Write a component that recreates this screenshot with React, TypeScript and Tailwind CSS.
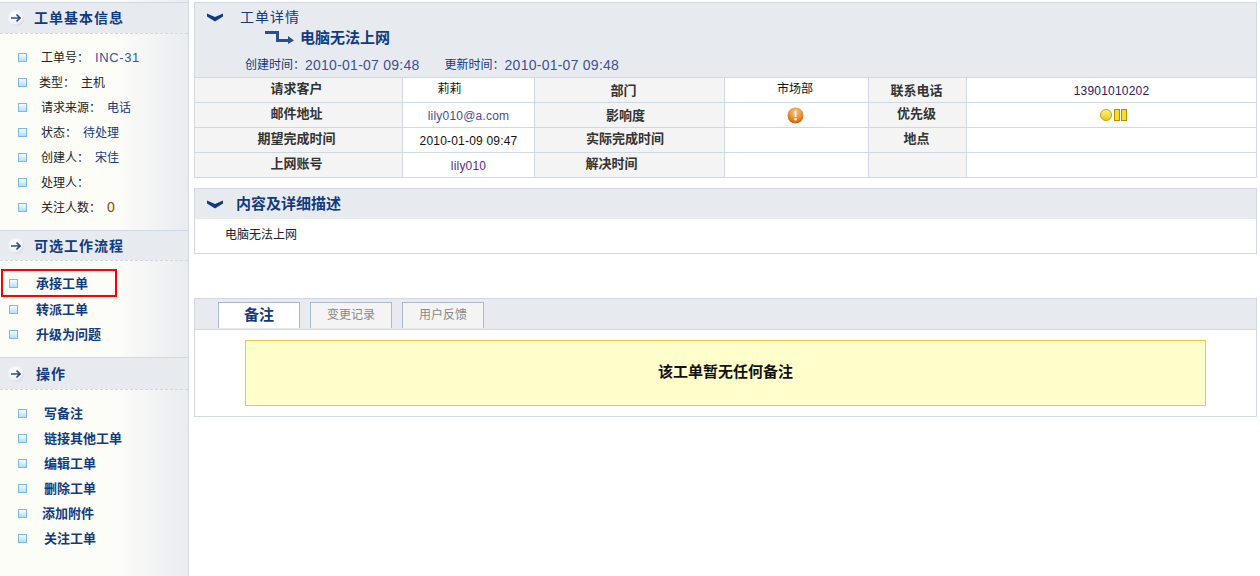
import type { ReactNode } from 'react';

const FONT = "font-['Liberation_Sans','Noto_Sans_CJK_SC',sans-serif]";

// サイドバー見出しの丸矢印
function ArrowBall() {
  return (
    <svg width="16" height="16" viewBox="0 0 16 16" className="shrink-0">
      <defs>
        <radialGradient id="ball" cx="0.4" cy="0.35" r="0.7">
          <stop offset="0" stopColor="#ffffff" />
          <stop offset="0.7" stopColor="#f0f1f4" />
          <stop offset="1" stopColor="#cfd4dc" />
        </radialGradient>
      </defs>
      <circle cx="8" cy="8" r="8" fill="url(#ball)" />
      <path d="M3 8h9M8.5 4.5 12 8l-3.5 3.5" fill="none" stroke="#2f4f7f" strokeWidth="1.7" />
    </svg>
  );
}

function Chevron() {
  return (
    <svg width="16" height="9" viewBox="0 0 16 9" className="shrink-0">
      <path d="M0 0.5 8 4 16 0.5V3.5L8 8.5 0 3.5Z" fill="#123a80" />
    </svg>
  );
}

function Bullet() {
  return (
    <span className="block h-[9px] w-[9px] shrink-0 border border-[#7db8e8] bg-gradient-to-b from-[#f5fbff] to-[#b5e0fa]" />
  );
}

function SideHeader({ title, pad, height }: { title: string; pad: string; height: string }) {
  return (
    <div className={`flex items-center border-t border-[#cfd8e3] bg-[#e7ebf0] pl-[8px] ${height}`}>
      <ArrowBall />
      <span className={`text-[14px] font-bold tracking-[1px] text-[#123a80] ${pad}`}>{title}</span>
    </div>
  );
}

function Dashed() {
  return <div className="h-px border-b border-dashed border-[#cfd8e3]" />;
}

function InfoRow({ label, value, tone, indent }: { label: string; value?: string; tone?: string; indent: string }) {
  return (
    <li className="flex h-[25px] items-center pl-[18px]">
      <Bullet />
      <span className={`text-[12px] text-[#222] ${indent}`}>{label}：</span>
      {value && <span className={`ml-[6px] ${tone ?? 'text-[12px] text-[#123a80]'}`}>{value}</span>}
    </li>
  );
}

function LinkRow({ label, indent }: { label: string; indent: string }) {
  return (
    <li className="flex h-[25px] items-center pl-[18px]">
      <Bullet />
      <span className={`text-[13px] font-bold text-[#123a80] ${indent}`}>{label}</span>
    </li>
  );
}

function FlowRow({ label }: { label: string }) {
  return (
    <li className="flex h-[25px] items-center pl-[9px]">
      <Bullet />
      <span className="ml-[18px] text-[13px] font-bold text-[#123a80]">{label}</span>
    </li>
  );
}

function Sidebar() {
  return (
    <aside className="flex h-[576px] w-[189px] shrink-0 flex-col border-r border-[#cfd8e3] bg-gradient-to-r from-[#fdfdf8] from-60% to-[#e9ecf0] pt-[2px]">
      <SideHeader title="工单基本信息" pad="ml-[10px]" height="h-[31px]" />
      <Dashed />
      <ul className="h-[196px] pt-[11px]">
        <InfoRow label="工单号" value="INC-31" tone="text-[13px] tracking-[0.6px] text-[#3b4f9a]" indent="ml-[14px]" />
        <InfoRow label="类型" value="主机" tone="text-[12px] text-[#222]" indent="ml-[12px]" />
        <InfoRow label="请求来源" value="电话" indent="ml-[14px]" />
        <InfoRow label="状态" value="待处理" indent="ml-[14px]" />
        <InfoRow label="创建人" value="宋佳" indent="ml-[14px]" />
        <InfoRow label="处理人" indent="ml-[14px]" />
        <InfoRow label="关注人数" value="0" tone="text-[14px] text-[#7a4a10]" indent="ml-[14px]" />
      </ul>
      <SideHeader title="可选工作流程" pad="ml-[10px] pt-[1px]" height="h-[30px]" />
      <Dashed />
      <div className="h-[96px] pt-[8px]">
        <div className="ml-[1px] flex h-[28px] w-[116px] items-center border-2 border-[#ff0000] pl-[6px]">
          <Bullet />
          <span className="ml-[18px] pt-[1px] text-[13px] font-bold text-[#123a80]">承接工单</span>
        </div>
        <ul>
          <FlowRow label="转派工单" />
          <FlowRow label="升级为问题" />
        </ul>
      </div>
      <SideHeader title="操作" pad="ml-[12px] pt-[1px]" height="h-[32px]" />
      <Dashed />
      <ul className="pt-[11px]">
        <LinkRow label="写备注" indent="ml-[17px]" />
        <LinkRow label="链接其他工单" indent="ml-[17px]" />
        <LinkRow label="编辑工单" indent="ml-[17px]" />
        <LinkRow label="删除工单" indent="ml-[17px]" />
        <LinkRow label="添加附件" indent="ml-[15px]" />
        <LinkRow label="关注工单" indent="ml-[17px]" />
      </ul>
    </aside>
  );
}

function Label({ children, cls }: { children?: ReactNode; cls: string }) {
  return (
    <td className={`${cls} border border-[#cfd8e3] bg-[#f4f4f4] text-center align-middle text-[13px] font-bold text-[#333]`}>
      {children}
    </td>
  );
}

function Value({ children, cls }: { children?: ReactNode; cls: string }) {
  return (
    <td className={`${cls} border border-[#cfd8e3] text-center align-middle text-[12px]`}>
      {children}
    </td>
  );
}

function ImpactIcon() {
  return (
    <svg width="17" height="17" viewBox="0 0 16 16" className="mx-auto block">
      <defs>
        <radialGradient id="impact" cx="0.5" cy="0.3" r="0.75">
          <stop offset="0" stopColor="#f9c98a" />
          <stop offset="0.6" stopColor="#e8892a" />
          <stop offset="1" stopColor="#b9560f" />
        </radialGradient>
      </defs>
      <circle cx="8" cy="8" r="7.5" fill="url(#impact)" />
      <path d="M6.9 3.5h2.2L8.7 9.5H7.3Z" fill="#fff" />
      <circle cx="8" cy="11.5" r="1.2" fill="#fff" />
    </svg>
  );
}

function PriorityIcon() {
  return (
    <div className="flex items-center justify-center gap-[1px]">
      <span className="h-[12px] w-[12px] rounded-full border border-[#c9a400] bg-gradient-to-b from-[#fff27a] to-[#eec900]" />
      <span className="ml-[1px] h-[12px] w-[6px] border border-[#b98f00] bg-[#f8d92c]" />
      <span className="h-[12px] w-[6px] border border-[#b98f00] bg-[#f8d92c]" />
    </div>
  );
}

function TicketDetail() {
  const latin = 'pt-[1px] tracking-[0.2px]';
  return (
    <section className="mt-[2px] border-r border-[#cfd8e3]">
      <div className="h-[75px] border-l border-t border-[#cfd8e3] bg-[#e7ebf0]">
        <div className="flex h-[26px] items-center pl-[12px] pt-[3px]">
          <Chevron />
          <span className="ml-[17px] text-[14px] tracking-[1px] text-[#123a80]">工单详情</span>
        </div>
        <div className="flex h-[17px] items-center pl-[70px]">
          <svg width="30" height="14" viewBox="0 0 30 14">
            <path d="M0 1.5h14M12.5 1.5v8H24" fill="none" stroke="#2a4f8a" strokeWidth="3" />
            <path d="M23 5 29 9.5 23 13Z" fill="#2a4f8a" />
          </svg>
          <span className="ml-[5px] pt-[1px] text-[15px] font-bold text-[#123a80]">电脑无法上网</span>
        </div>
        <div className="flex h-[27px] items-center pl-[50px] pt-[11px] text-[12px] text-[#123a80]">
          <span>创建时间：</span>
          <span className="text-[14px] tracking-[0.25px] text-[#3f4f96]">2010-01-07 09:48</span>
          <span className="ml-[25px]">更新时间：</span>
          <span className="text-[14px] tracking-[0.25px] text-[#3f4f96]">2010-01-07 09:48</span>
        </div>
      </div>
      <table className="w-[1062px] table-fixed border-collapse">
        <tbody>
          <tr className="h-[25px]">
            <Label cls="w-[208px] pr-[4px] pb-[2px]">请求客户</Label>
            <Value cls="w-[132px] pr-[38px] pb-[2px] text-[#111]">莉莉</Value>
            <Label cls="w-[190px] pr-[12px] pt-[2px]">部门</Label>
            <Value cls="w-[144px] pr-[3px] pb-[2px] text-[#111]">市场部</Value>
            <Label cls="w-[98px] pr-[2px] pt-[2px]">联系电话</Label>
            <Value cls={`w-[290px] text-[#2a2060] ${latin}`}>13901010202</Value>
          </tr>
          <tr className="h-[25px]">
            <Label cls="pr-[4px] pb-[2px]">邮件地址</Label>
            <Value cls={`text-[#4a4f8a] ${latin}`}>lily010@a.com</Value>
            <Label cls="pr-[8px] pt-[2px]">影响度</Label>
            <Value cls="pr-[2px]"><ImpactIcon /></Value>
            <Label cls="pr-[2px] pb-[2px]">优先级</Label>
            <Value cls="pl-[3px]"><PriorityIcon /></Value>
          </tr>
          <tr className="h-[25px]">
            <Label cls="pr-[4px] pb-[2px]">期望完成时间</Label>
            <Value cls={`text-[#111] ${latin}`}>2010-01-09 09:47</Value>
            <Label cls="pr-[9px] pb-[2px]">实际完成时间</Label>
            <Value cls="" />
            <Label cls="pr-[2px] pb-[2px]">地点</Label>
            <Value cls="" />
          </tr>
          <tr className="h-[25px]">
            <Label cls="pr-[4px] pb-[2px]">上网账号</Label>
            <Value cls={`text-[#5a2a8a] ${latin}`}>lily010</Value>
            <Label cls="pr-[36px] pb-[2px]">解决时间</Label>
            <Value cls="" />
            <Label cls="" />
            <Value cls="" />
          </tr>
        </tbody>
      </table>
    </section>
  );
}

function Description() {
  return (
    <section className="mt-[10px] border border-[#cfd8e3]">
      <div className="flex h-[30px] items-center bg-[#e7ebf0] pl-[12px]">
        <Chevron />
        <span className="ml-[13px] text-[15px] font-bold text-[#123a80]">内容及详细描述</span>
      </div>
      <p className="h-[34px] pl-[30px] pt-[7px] text-[12px] leading-[18px] text-[#222]">电脑无法上网</p>
    </section>
  );
}

function Notes() {
  return (
    <section className="mt-[44px] border border-[#cfd8e3]">
      <div className="flex h-[31px] items-end gap-[10px] border-b border-[#cfd8e3] bg-[#e7ebf0] pb-[1px] pl-[23px]">
        <div className="flex h-[26px] w-[82px] items-center justify-center border border-b-0 border-[#a9bacd] bg-white pb-[1px] text-[15px] font-bold text-[#123a80]">
          备注
        </div>
        <div className="flex h-[26px] w-[82px] items-center justify-center border border-b-0 border-[#a9bacd] bg-[#f4f4f4] pb-[1px] text-[12px] text-[#888]">
          变更记录
        </div>
        <div className="flex h-[26px] w-[82px] items-center justify-center border border-b-0 border-[#a9bacd] bg-[#f4f4f4] pb-[1px] text-[12px] text-[#888]">
          用户反馈
        </div>
      </div>
      <div className="h-[86px] pl-[50px] pr-[50px] pt-[10px]">
        <div className="flex h-[66px] w-[961px] items-center justify-center border border-[#f0c840] bg-[#ffffcc] pb-[2px] text-[15px] font-bold text-[#111]">
          该工单暂无任何备注
        </div>
      </div>
    </section>
  );
}

export default function App() {
  return (
    <div className={`${FONT} flex h-[576px] w-[1260px] overflow-hidden bg-white`}>
      <Sidebar />
      <main className="ml-[5px] w-[1063px]">
        <TicketDetail />
        <Description />
        <Notes />
      </main>
    </div>
  );
}
